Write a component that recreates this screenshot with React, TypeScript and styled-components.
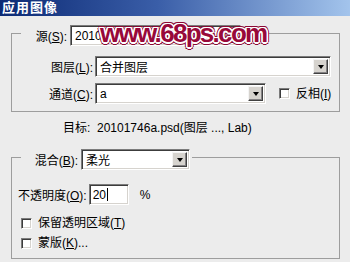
import styled, { createGlobalStyle } from "styled-components";

const GlobalStyle = createGlobalStyle`
  body {
    margin: 0;
    background: #ececec;
  }
`;

const FONT = `"Liberation Sans", "Noto Sans CJK SC", sans-serif`;

export default function App() {
  return (
    <>
      <GlobalStyle />
      <Dialog>
        <TitleBar>应用图像</TitleBar>
        <Body>
          <Group>
            <Legend>
              <Label $width={46}>源(<u>S</u>):</Label>
              <Select $width={171} value="20101746a.psd" />
            </Legend>
            <Row $top={10}>
              <Label $width={81}>图层(<u>L</u>):</Label>
              <Select $width={236} value="合并图层" />
            </Row>
            <Row $top={6}>
              <Label $width={81}>通道(<u>C</u>):</Label>
              <Select $width={171} value="a" />
              <CheckLabel $left={11}>
                <Box />
                <span>反相(<u>I</u>)</span>
              </CheckLabel>
            </Row>
          </Group>

          <Target>目标:&nbsp; 20101746a.psd(图层 ..., Lab)</Target>

          <Group $bottom={8}>
            <Legend>
              <Label $width={57}>混合(<u>B</u>):</Label>
              <Select $width={109} value="柔光" />
            </Legend>
            <Row $top={14} $left={6}>
              <Label>不透明度(<u>O</u>):</Label>
              <Field>20<Caret /></Field>
              <Percent>%</Percent>
            </Row>
            <Row $top={11} $left={9}>
              <CheckLabel>
                <Box />
                <span>保留透明区域(<u>T</u>)</span>
              </CheckLabel>
            </Row>
            <Row $top={6} $left={9}>
              <CheckLabel>
                <Box />
                <span>蒙版(<u>K</u>)...</span>
              </CheckLabel>
            </Row>
          </Group>
        </Body>
        <Watermark>www.68ps.com</Watermark>
      </Dialog>
    </>
  );
}

function Select({ value, $width }: { value: string; $width: number }) {
  return (
    <SelectBox $width={$width}>
      <span>{value}</span>
      <DropButton>
        <Arrow />
      </DropButton>
    </SelectBox>
  );
}

const Dialog = styled.div`
  position: relative;
  width: 350px;
  height: 262px;
  overflow: hidden;
  background: #ececec;
  font-family: ${FONT};
  font-size: 12px;
  color: #000;

  u {
    text-decoration: underline;
    text-underline-offset: 1px;
  }
`;

const TitleBar = styled.div`
  height: 16px;
  line-height: 15px;
  padding-left: 2px;
  color: #fff;
  font-weight: bold;
  font-size: 13px;
  letter-spacing: 1px;
  background: linear-gradient(to right, #0c2a74 0%, #3a5ea8 45%, #a3c4ec 100%);
`;

const Body = styled.div`
  padding: 4px 10px 0 11px;
  display: flex;
  flex-direction: column;
`;

const Group = styled.fieldset<{ $bottom?: number }>`
  margin: 0;
  padding: 0 0 ${(p) => p.$bottom ?? 7}px 0;
  border: 1px solid #9d9d9d;
  display: flex;
  flex-direction: column;
`;

const Legend = styled.legend`
  margin-left: 9px;
  padding: 5px 2px 0 0;
  display: flex;
  align-items: center;
  gap: 3px;
`;

const Row = styled.div<{ $top?: number; $left?: number }>`
  display: flex;
  align-items: center;
  gap: 2px;
  margin-top: ${(p) => p.$top ?? 0}px;
  padding-left: ${(p) => p.$left ?? 0}px;
`;

const Label = styled.span<{ $width?: number }>`
  width: ${(p) => (p.$width ? `${p.$width}px` : "auto")};
  text-align: right;
  white-space: nowrap;
`;

const SelectBox = styled.div<{ $width: number }>`
  box-sizing: border-box;
  width: ${(p) => p.$width}px;
  height: 21px;
  display: flex;
  align-items: center;
  justify-content: space-between;
  padding: 2px 2px 2px 4px;
  background: #fff;
  border: 1px solid;
  border-color: #7b7b7b #fff #fff #7b7b7b;
  box-shadow: inset 1px 1px #3c3c3c, inset -1px -1px #d6d3ce;
`;

const DropButton = styled.div`
  box-sizing: border-box;
  width: 15px;
  height: 15px;
  display: flex;
  align-items: center;
  justify-content: center;
  background: #d6d3ce;
  border: 1px solid;
  border-color: #f4f4f4 #404040 #404040 #f4f4f4;
  box-shadow: inset -1px -1px #848284;
`;

const Arrow = styled.div`
  width: 0;
  height: 0;
  border-left: 3px solid transparent;
  border-right: 3px solid transparent;
  border-top: 4px solid #000;
`;

const CheckLabel = styled.label<{ $left?: number }>`
  display: flex;
  align-items: center;
  gap: 6px;
  line-height: 14px;
  margin-left: ${(p) => p.$left ?? 0}px;
  white-space: nowrap;
`;

const Box = styled.span`
  box-sizing: border-box;
  width: 11px;
  height: 11px;
  background: #fff;
  border: 1px solid;
  border-color: #7b7b7b #fff #fff #7b7b7b;
  box-shadow: inset 1px 1px #3c3c3c, inset -1px -1px #d6d3ce;
`;

const Target = styled.div`
  margin: 9px 0 9px 52px;
  line-height: 14px;
  white-space: nowrap;
`;

const Field = styled.div`
  box-sizing: border-box;
  width: 40px;
  height: 21px;
  display: flex;
  align-items: center;
  padding-left: 3px;
  background: #fff;
  border: 1px solid;
  border-color: #7b7b7b #fff #fff #7b7b7b;
  box-shadow: inset 1px 1px #3c3c3c, inset -1px -1px #d6d3ce;
`;

const Caret = styled.span`
  display: inline-block;
  width: 1px;
  height: 13px;
  margin-left: 1px;
  background: #000;
`;

const Percent = styled.span`
  margin-left: 9px;
`;

const Watermark = styled.div`
  position: absolute;
  left: 100px;
  top: 18px;
  font-family: "Liberation Sans", "DejaVu Sans", sans-serif;
  font-weight: bold;
  font-size: 26px;
  letter-spacing: -1.7px;
  color: #98093a;
  text-shadow:
    1.5px 0 #fff, -1.5px 0 #fff, 0 1.5px #fff, 0 -1.5px #fff,
    1.2px 1.2px #fff, -1.2px 1.2px #fff, 1.2px -1.2px #fff, -1.2px -1.2px #fff,
    2.5px 0 #8a0833, -2.5px 0 #8a0833, 0 2.5px #8a0833, 0 -2.5px #8a0833,
    1.8px 1.8px #8a0833, -1.8px 1.8px #8a0833, 1.8px -1.8px #8a0833, -1.8px -1.8px #8a0833;
`;
